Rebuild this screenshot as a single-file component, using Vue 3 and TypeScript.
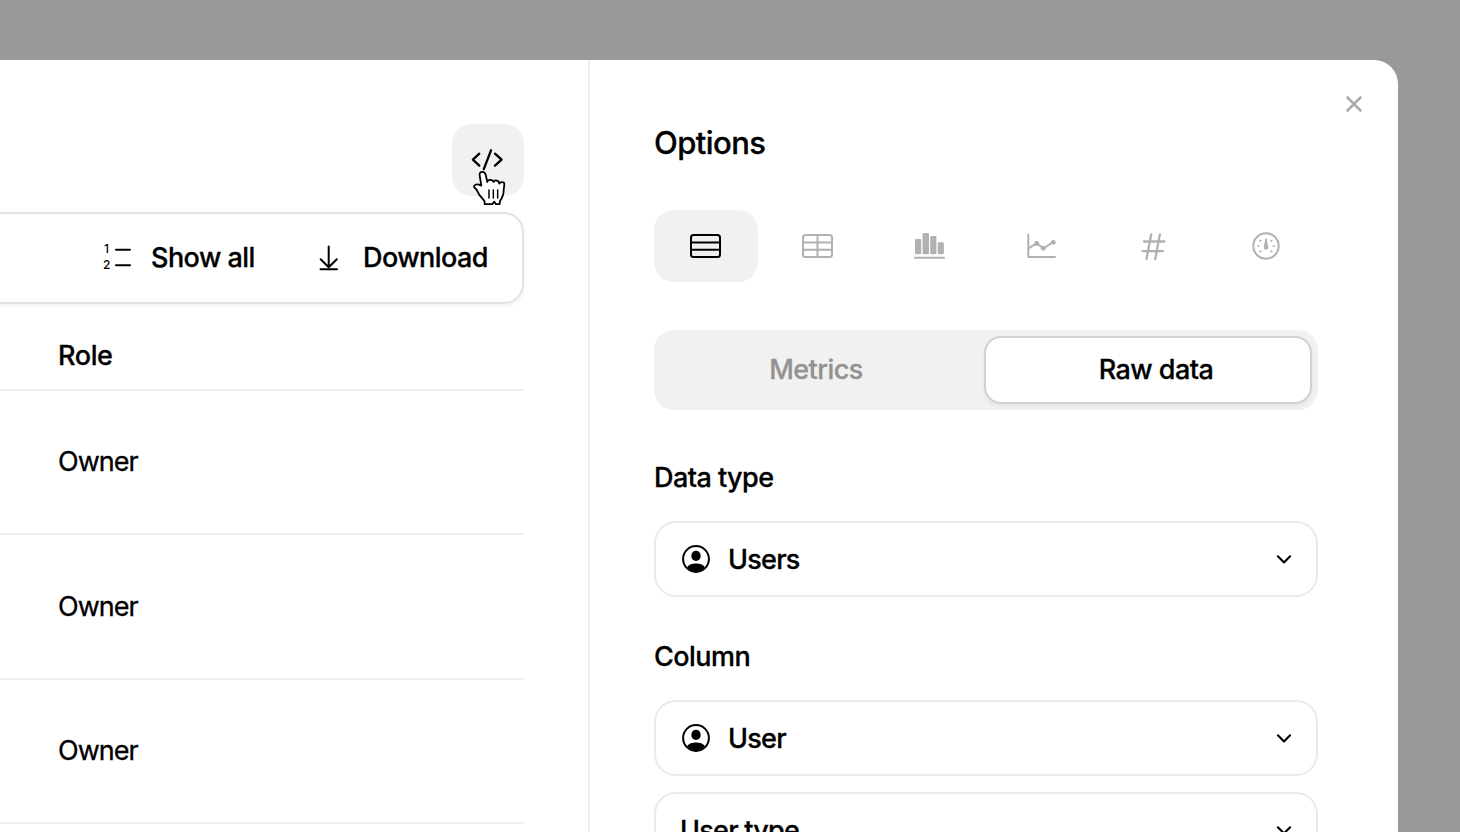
<script setup lang="ts">
type ViewKind = 'rows' | 'table' | 'bars' | 'line' | 'number' | 'gauge'

const views: ViewKind[] = ['rows', 'table', 'bars', 'line', 'number', 'gauge']
const activeView: ViewKind = 'rows'
const roles: string[] = ['Owner', 'Owner', 'Owner']

interface Field {
  label: string
  key: string
  hasIcon: boolean
}

interface FieldGroup {
  title: string
  key: string
  fields: Field[]
}

const groups: FieldGroup[] = [
  { title: 'Data type', key: 'datatype', fields: [{ label: 'Users', key: 'users', hasIcon: true }] },
  {
    title: 'Column',
    key: 'column',
    fields: [
      { label: 'User', key: 'user', hasIcon: true },
      { label: 'User type', key: 'usertype', hasIcon: false },
    ],
  },
]

const gaugeDots: number[][] = [
  [46.4, 30.8], [57.4, 30.8], [44.3, 36], [59.7, 36], [46.4, 41.3], [57.4, 41.3],
]
</script>

<template>
  <div class="backdrop">
    <div class="modal">
      <section class="preview">
        <button class="code-button" aria-label="Code">
          <svg class="code" width="72" height="72" viewBox="0 0 72 72">
            <path d="M27.3 29.7 20.9 35.7 27.3 41.7M39 26.3 31.8 45.2M43 29.7 49.6 35.7 43 41.7" />
          </svg>
          <svg class="pointer" width="34" height="36" viewBox="126 180 102 108">
            <path
              d="M157 185.500C151 185.500 148 190 149 196L154 227 147 224C139 221 132 225 132 231C139 236 142 243 146 251C150 260 160 266 164 275L164 282.500 187 282.500 193 275 198 282.500 209 282.500 210 273C218 262 221 252 221 240L223 223C223 214 211 215 208 221C208 211 194 208 191 216C188 207 173 208 172 216L167 194C165 188 162 185.500 157 185.500Z"
            />
            <path class="fingers" d="M177 240V264M190 240V264M203 240V264" />
          </svg>
        </button>
        <div class="toolbar">
          <button class="tool show-all">
            <svg width="30" height="32" viewBox="0 0 30 32">
              <text x="2" y="11">1</text>
              <text x="1" y="27">2</text>
              <path d="M14 7.700H28M14 23.300H28" />
            </svg>
            <span>Show all</span>
          </button>
          <button class="tool download">
            <svg width="20" height="32" viewBox="0 0 20 32">
              <path d="M9.700 4.500V24.500M1.700 17.300 9.700 25.200 17.800 17.300" />
              <path d="M1.500 27.300H18" />
            </svg>
            <span>Download</span>
          </button>
        </div>
        <div class="table">
          <div class="head"><span class="t-role">Role</span></div>
          <div v-for="(role, i) in roles" :key="i" class="row"><span>{{ role }}</span></div>
        </div>
      </section>

      <aside class="options">
        <button class="close" aria-label="Close">
          <svg width="16" height="16" viewBox="0 0 16 16"><path d="M1.500 1.500 14.500 14.500M14.500 1.500 1.500 14.500" /></svg>
        </button>
        <h2>Options</h2>
        <div class="views">
          <button v-for="view in views" :key="view" class="view" :class="{ active: view === activeView }" :aria-label="view">
            <svg width="104" height="72" viewBox="0 0 104 72">
              <template v-if="view === 'rows'">
                <rect x="37" y="25" width="29" height="22" rx="2.500" />
                <path d="M37 32.500H66M37 39.700H66" />
              </template>
              <template v-else-if="view === 'table'">
                <rect x="37" y="25" width="29" height="22" rx="2.500" />
                <path d="M37 32.500H66M37 39.700H66M51.500 25V47" />
              </template>
              <template v-else-if="view === 'bars'">
                <g class="solid">
                  <rect x="37" y="29" width="6.200" height="15.300" rx="1.200" />
                  <rect x="44.600" y="23" width="6.400" height="21.300" rx="1.200" />
                  <rect x="52.200" y="26" width="6.200" height="18.300" rx="1.200" />
                  <rect x="59.700" y="32.300" width="6.200" height="12" rx="1.200" />
                </g>
                <path d="M37 47.700H66" />
              </template>
              <template v-else-if="view === 'line'">
                <path d="M38.300 24.500V47.100H65M38.300 38.300 46.700 33.300 53.300 38.300 63.300 32" />
                <g class="solid">
                  <circle cx="46.700" cy="33.500" r="2.400" />
                  <circle cx="53.300" cy="38.300" r="2.400" />
                  <circle cx="63.300" cy="32.300" r="2.400" />
                </g>
              </template>
              <path
                v-else-if="view === 'number'"
                class="hash"
                d="M49.200 24.300 44.500 49M57.900 24.300 53.200 49M42 31.500H62.400M40.500 41.200H60.800"
              />
              <template v-else>
                <circle cx="52" cy="36" r="12.700" />
                <g class="solid">
                  <path d="M51.300 28.500Q52 27.500 52.700 28.500L54.100 36.800A2.200 2.200 0 1 1 49.900 36.800Z" />
                  <circle v-for="([x, y], i) in gaugeDots" :key="i" :cx="x" :cy="y" r="1.100" />
                </g>
              </template>
            </svg>
          </button>
        </div>
        <div class="segments">
          <button class="segment muted">Metrics</button>
          <button class="segment selected">Raw data</button>
        </div>
        <div v-for="group in groups" :key="group.key" class="group">
          <h3>{{ group.title }}</h3>
          <button v-for="field in group.fields" :key="field.key" class="select">
            <svg v-if="field.hasIcon" class="avatar" width="28" height="28" viewBox="0 0 28 28">
              <circle cx="14" cy="14" r="12.900" />
              <ellipse class="fill" cx="14" cy="10.900" rx="4.700" ry="5.100" />
              <path class="fill" d="M5 22.300C7 19.600 10 18.600 14 18.600C18 18.600 21 19.600 23 22.300A12.400 12.400 0 0 1 5 22.300Z" />
            </svg>
            <span class="value">{{ field.label }}</span>
            <svg class="chevron" width="16" height="10" viewBox="0 0 16 10"><path d="M1.900 2.300 8 8.400 14.100 2.300" /></svg>
          </button>
        </div>
      </aside>
    </div>
  </div>
</template>

<style>
body {
  margin: 0;
  overflow: hidden;
}
</style>

<style scoped>
.backdrop {
  box-sizing: border-box;
  width: 1460px;
  height: 832px;
  padding-top: 60px;
  overflow: hidden;
  background: #999;
  font-family: Inter, "Liberation Sans", sans-serif;
  font-size: 27px;
  font-weight: 500;
  line-height: 32px;
  letter-spacing: -0.55px;
  -webkit-text-stroke: 0.3px currentColor;
  color: #000;
}
.backdrop * {
  box-sizing: border-box;
}
button {
  display: flex;
  align-items: center;
  padding: 0;
  border: 0;
  background: none;
  color: inherit;
  font: inherit;
  letter-spacing: inherit;
  white-space: nowrap;
}
svg {
  display: block;
  flex: none;
  fill: none;
  stroke: currentColor;
  stroke-width: 2;
  stroke-linecap: round;
  stroke-linejoin: round;
}
.modal {
  display: flex;
  width: 1398px;
  height: 900px;
  border-top-right-radius: 24px;
  background: #fff;
}
.preview {
  display: flex;
  flex-direction: column;
  width: 590px;
  padding: 64px 64px 0 0;
  border-right: 2px solid #efefef;
}
.preview > * {
  flex: none;
}
.code-button {
  position: relative;
  align-self: flex-end;
  width: 72px;
  height: 72px;
  border-radius: 20px;
  background: #f1f1f1;
}
.code {
  stroke-width: 2.3;
}
.pointer {
  position: absolute;
  left: 20px;
  top: 46px;
  fill: #fff;
  stroke: #000;
  stroke-width: 5.4;
}
.pointer .fingers {
  stroke-width: 4.5;
}
.toolbar {
  display: flex;
  align-items: center;
  height: 92px;
  margin-top: 16px;
  padding-left: 102px;
  border: 2px solid #e3e3e3;
  border-left: 0;
  border-radius: 0 20px 20px 0;
  box-shadow: 0 2px 4px rgba(0, 0, 0, 0.06);
}
.show-all {
  width: 217px;
  gap: 19px;
}
.show-all text {
  fill: currentColor;
  stroke: none;
  font-size: 12px;
  font-weight: 500;
  letter-spacing: 0;
}
.download {
  gap: 24px;
}
.head {
  display: flex;
  align-items: center;
  height: 87px;
  padding: 18px 0 0 58px;
  border-bottom: 2px solid #efefef;
  letter-spacing: -0.4px;
}
.row {
  display: flex;
  align-items: center;
  height: 144.4px;
  padding-left: 58px;
  border-bottom: 2px solid #efefef;
  font-weight: 400;
  letter-spacing: -1px;
}
.options {
  position: relative;
  width: 808px;
  padding: 64px 80px 0 64px;
}
.close {
  position: absolute;
  top: 36px;
  right: 36px;
  color: #a9a9a9;
}
.close svg {
  stroke-width: 2.5;
}
h2,
h3 {
  margin: 0;
  font: inherit;
}
h2 {
  height: 40px;
  font-size: 31px;
  line-height: 38px;
}
.views {
  display: flex;
  gap: 8px;
  margin-top: 46px;
}
.view {
  width: 104px;
  height: 72px;
  border-radius: 20px;
  color: #b1b1b1;
}
.view.active {
  background: #f1f1f1;
  color: #000;
}
.hash {
  stroke-width: 2.3;
}
.solid {
  fill: currentColor;
  stroke: none;
}
.segments {
  display: flex;
  height: 80px;
  margin-top: 48px;
  padding: 6px;
  border-radius: 20px;
  background: #f1f1f1;
}
.segment {
  justify-content: center;
}
.muted {
  width: 324px;
  padding-right: 12px;
  color: #929292;
}
.selected {
  width: 328px;
  padding-left: 16px;
  border: 2px solid #d2d2d2;
  border-radius: 17px;
  background: #fff;
  box-shadow: 0 2px 4px rgba(0, 0, 0, 0.06);
}
.group {
  display: flex;
  flex-direction: column;
}
.segments + .group {
  margin-top: 52px;
}
.group + .group {
  margin-top: 44px;
}
h3 {
  height: 32px;
  margin-bottom: 27px;
}
.select {
  width: 664px;
  height: 76px;
  padding: 0 24px;
  border: 2px solid #eaeaea;
  border-radius: 22px;
}
.select + .select {
  margin-top: 16px;
}
.value {
  padding-top: 2px;
  letter-spacing: -0.75px;
}
.avatar {
  margin: 0 18px 0 2px;
}
.avatar .fill {
  fill: currentColor;
  stroke: none;
}
.chevron {
  margin-left: auto;
  stroke-width: 2.1;
}
</style>
